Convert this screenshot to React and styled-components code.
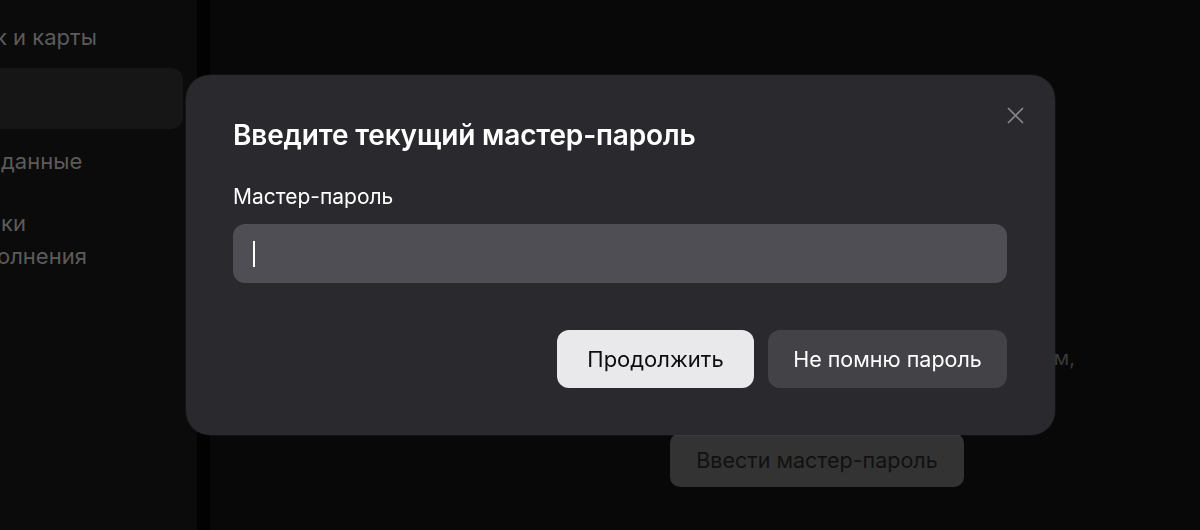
import React from 'react';
import styled, { createGlobalStyle } from 'styled-components';

const GlobalStyle = createGlobalStyle`
  html, body {
    margin: 0;
    padding: 0;
    background: #080808;
    font-family: Inter, "Noto Sans", sans-serif;
    overflow: hidden;
  }
`;

const Page = styled.div`
  display: flex;
  width: 1200px;
  height: 530px;
  background: #080808;
`;

const Sidebar = styled.nav`
  width: 197px;
  flex-shrink: 0;
  background: #0b0b0b;
  padding-top: 6px;
  box-sizing: border-box;
  display: flex;
  flex-direction: column;
  overflow: hidden;
`;

const NavItem = styled.div`
  margin-right: 14px;
  height: ${p => p.$h}px;
  flex-shrink: 0;
  border-radius: 0 12px 12px 0;
  background: ${p => p.$active ? '#161616' : 'transparent'};
  color: #5b5b5b;
  font-size: 22px;
  line-height: 33px;
  white-space: nowrap;
  display: flex;
  flex-direction: column;
  justify-content: center;
  padding-left: 1px;
`;

const NavLine = styled.span`
  margin-left: ${p => p.$shift || 0}px;
`;

const Strip = styled.div`
  width: 13px;
  flex-shrink: 0;
  background: #020202;
`;

const Main = styled.main`
  flex: 1;
  display: flex;
  flex-direction: column;
  align-items: flex-end;
  padding: 344px 236px 0 0;
  box-sizing: border-box;
`;

const Para = styled.p`
  margin: 0 -111px 0 0;
  color: #3a3a3a;
  font-size: 20px;
  line-height: 28px;
  white-space: nowrap;
`;

const GhostButton = styled.div`
  margin-top: 61px;
  width: 294px;
  height: 54px;
  border-radius: 10px;
  background: #333333;
  color: #111111;
  font-size: 21.5px;
  display: flex;
  align-items: center;
  justify-content: center;
`;

const Overlay = styled.div`
  position: fixed;
  inset: 0;
  padding: 75px 0 0 186px;
`;

const Modal = styled.div`
  position: relative;
  width: 869px;
  height: 360px;
  box-sizing: border-box;
  padding: 40px 48px 47px 47px;
  background: #29292e;
  border-radius: 24px;
  box-shadow: 0 0 0 1px rgba(255,255,255,0.04);
  display: flex;
  flex-direction: column;
`;

const Close = styled.button`
  position: absolute;
  top: 30px;
  right: 30px;
  width: 20px;
  height: 20px;
  padding: 0;
  border: 0;
  background: none;
  display: flex;
  align-items: center;
  justify-content: center;
`;

const Title = styled.h2`
  margin: 0;
  color: #ffffff;
  font-size: 28px;
  font-weight: 600;
  line-height: 40px;
  letter-spacing: -0.15px;
`;

const Label = styled.label`
  margin-top: 28px;
  color: #ffffff;
  font-size: 21px;
  line-height: 28px;
`;

const Field = styled.div`
  margin-top: 13px;
  height: 59px;
  border-radius: 12px;
  background: #4f4e54;
  display: flex;
  align-items: center;
  padding-left: 20px;
`;

const Caret = styled.span`
  width: 2px;
  height: 26px;
  background: #ffffff;
`;

const Actions = styled.div`
  margin-top: auto;
  display: flex;
  justify-content: flex-end;
  gap: 14px;
`;

const Button = styled.button`
  height: 58px;
  width: ${p => p.$w}px;
  border: 0;
  border-radius: 12px;
  font-family: inherit;
  font-size: ${p => p.$primary ? 22 : 21.5}px;
  background: ${p => p.$primary ? '#e9e9ec' : '#434247'};
  color: ${p => p.$primary ? '#0d0d0d' : '#ffffff'};
`;

export default function App() {
  return (
    <>
      <GlobalStyle />
      <Page>
        <Sidebar>
          <NavItem $h={62}><NavLine $shift={-6}>к и карты</NavLine></NavItem>
          <NavItem $h={61} $active />
          <NavItem $h={64}><NavLine>данные</NavLine></NavItem>
          <NavItem $h={93}>
            <NavLine>ки</NavLine>
            <NavLine $shift={-4}>олнения</NavLine>
          </NavItem>
        </Sidebar>
        <Strip />
        <Main>
          <Para>паролем,</Para>
          <GhostButton>Ввести мастер-пароль</GhostButton>
        </Main>
      </Page>
      <Overlay>
        <Modal>
          <Close aria-label="Закрыть">
            <svg width="17" height="17" viewBox="0 0 17 17">
              <path d="M1 1L16 16M16 1L1 16" stroke="#88888c" strokeWidth="1.7" />
            </svg>
          </Close>
          <Title>Введите текущий мастер-пароль</Title>
          <Label>Мастер-пароль</Label>
          <Field><Caret /></Field>
          <Actions>
            <Button $primary $w={197}>Продолжить</Button>
            <Button $w={239}>Не помню пароль</Button>
          </Actions>
        </Modal>
      </Overlay>
    </>
  );
}
